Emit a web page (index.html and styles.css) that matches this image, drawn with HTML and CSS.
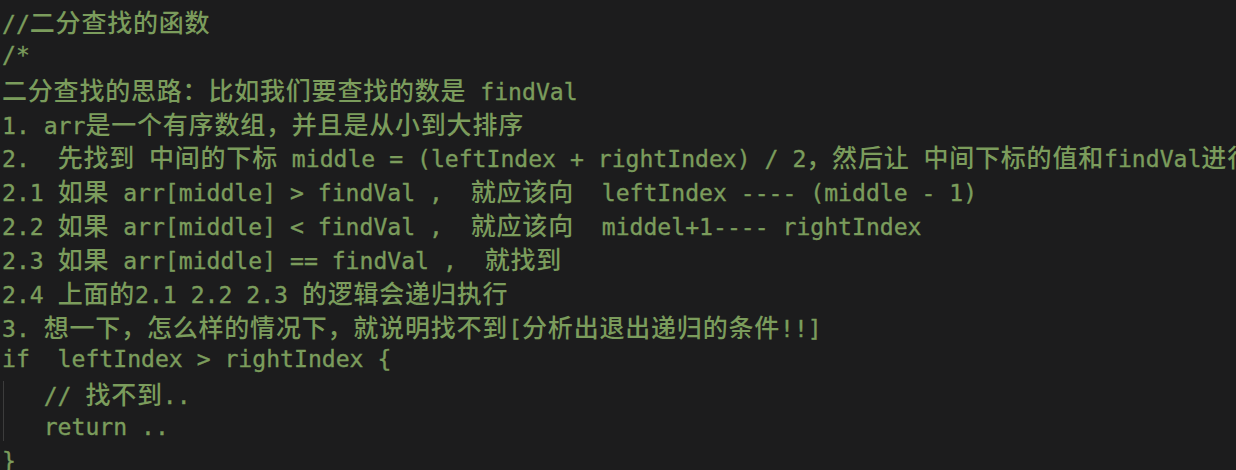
FILE: index.html
```html
<!DOCTYPE html>
<html lang="zh-CN">
<head>
<meta charset="utf-8">
<title>二分查找</title>
<link rel="stylesheet" href="styles.css">
</head>
<body>
<div class="code">
<div class="ln">//<span class="c">二分查找的函数</span></div>
<div class="ln">/*</div>
<div class="ln"><span class="c">二分查找的思路：比如我们要查找的数是</span> findVal</div>
<div class="ln">1. arr<span class="c">是一个有序数组，并且是从小到大排序</span></div>
<div class="ln">2.  <span class="c">先找到</span> <span class="c">中间的下标</span> middle = (leftIndex + rightIndex) / 2<span class="c">，然后让</span> <span class="c">中间下标的值和</span>findVal<span class="c">进行比较</span></div>
<div class="ln">2.1 <span class="c">如果</span> arr[middle] &gt; findVal ,  <span class="c">就应该向</span>  leftIndex ---- (middle - 1)</div>
<div class="ln">2.2 <span class="c">如果</span> arr[middle] &lt; findVal ,  <span class="c">就应该向</span>  middel+1---- rightIndex</div>
<div class="ln">2.3 <span class="c">如果</span> arr[middle] == findVal ,  <span class="c">就找到</span></div>
<div class="ln">2.4 <span class="c">上面的</span>2.1 2.2 2.3 <span class="c">的逻辑会递归执行</span></div>
<div class="ln">3. <span class="c">想一下，怎么样的情况下，就说明找不到</span>[<span class="c">分析出退出递归的条件</span>!!]</div>
<div class="ln">if  leftIndex &gt; rightIndex {</div>
<div class="blk">
<div class="ln">   // <span class="c">找不到</span>..</div>
<div class="ln">   return ..</div>
</div>
<div class="ln">}</div>
</div>
</body>
</html>
```
FILE: styles.css
```css
html, body {
  margin: 0;
  padding: 0;
  background: #1c1c1d;
  height: 100%;
  overflow: hidden;
}
.code {
  padding: 5px 0 0 2px;
  font-family: "DejaVu Sans Mono", "Noto Sans CJK SC", monospace;
  font-size: 23.1px;
  color: #7b9c5c;
  -webkit-text-stroke: 0.35px #7b9c5c;
}
.ln {
  height: 33.85px;
  line-height: 33.85px;
  white-space: pre;
}
.c {
  font-family: "Noto Sans CJK SC", sans-serif;
  font-size: 25px;
  font-weight: 500;
  letter-spacing: 0.8px;
  -webkit-text-stroke: 0;
}
.blk {
  background: linear-gradient(#3c3c3c, #3c3c3c) no-repeat 1px 4px / 1px calc(100% - 8px);
}
```
